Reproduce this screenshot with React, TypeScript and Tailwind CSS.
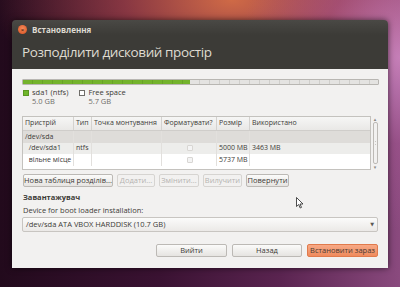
import React from 'react'

const font = { fontFamily: '"Open Sans", "DejaVu Sans", sans-serif' }

const Btn = ({ children, w, disabled, primary }: { children: React.ReactNode; w: string; disabled?: boolean; primary?: boolean }) => (
  <div
    className={`${w} h-[13px] flex items-center justify-center rounded-[2px] border text-[7.5px] leading-none whitespace-nowrap ${
      primary
        ? 'bg-gradient-to-b from-[#f7a986] to-[#ef8a5c] border-[#e07a4c] text-[#4a3a32]'
        : disabled
        ? 'bg-[#f2f1f0] border-[#d6d4d1] text-[#b5b3b0]'
        : 'bg-gradient-to-b from-[#fbfbfa] to-[#e6e4e1] border-[#bcb9b5] text-[#3c3b37]'
    }`}
  >
    {children}
  </div>
)

const Check = () => <div className="w-[6px] h-[6px] border border-[#d8d6d3] bg-[#f4f4f4] rounded-[1px]" />

export default function App() {
  const cols = ['w-[51px]', 'w-[18px]', 'w-[70px]', 'w-[55px]', 'w-[33px]', 'flex-1']
  const rows = [
    { bg: 'bg-[#dedcd9]', cells: ['/dev/sda', '', '', '', '', ''] },
    { bg: 'bg-[#ededeb]', cells: ['  /dev/sda1', 'ntfs', '', 'c', '5000 MB', '3463 MB'] },
    { bg: 'bg-white', cells: ['  вільне місце', '', '', 'c', '5737 MB', ''] },
  ]
  return (
    <div
      style={font}
      className="w-[400px] h-[287px] overflow-hidden relative bg-[linear-gradient(90deg,#220a1c_0%,#3a1232_40%,#5a2450_70%,#8a4a7e_100%)]"
    >
      <div className="absolute inset-0 bg-[radial-gradient(ellipse_60%_40%_at_58%_0%,rgba(214,110,70,0.95)_0%,rgba(190,80,80,0.6)_45%,rgba(120,40,80,0)_100%)]" />
      <div className="absolute inset-0 bg-[radial-gradient(ellipse_40%_60%_at_100%_20%,rgba(210,140,200,0.8)_0%,rgba(170,90,150,0.4)_50%,rgba(120,50,100,0)_100%)]" />
      <div className="relative ml-[12px] mt-[20px] w-[376px] h-[248px] flex flex-col rounded-t-[4px] overflow-hidden shadow-[0_0_6px_rgba(0,0,0,0.6)]">
        <div className="h-[49px] bg-gradient-to-b from-[#4a4945] to-[#3c3b37] to-[30%] flex flex-col px-[6px]">
          <div className="flex items-center h-[17px] mt-[1px]">
            <div className="w-[9px] h-[9px] rounded-full bg-[radial-gradient(circle_at_50%_40%,#f58a5a,#d9501f)] flex items-center justify-center">
              <span className="text-[6px] leading-none text-[#5a2a15] font-bold">×</span>
            </div>
            <span className="ml-[5px] text-[8px] font-bold text-[#dfdbd2]">Встановлення</span>
          </div>
          <div className="mt-[8px] ml-[4px] text-[13.5px] tracking-[-0.4px] leading-none text-[#dfdbd2] whitespace-nowrap">
            Розподілити дисковий простір
          </div>
        </div>
        <div className="flex-1 bg-[#f2f1f0] px-[10px] pt-[10px] flex flex-col">
          <div className="h-[6px] w-[357px] flex rounded-[1px] overflow-hidden border border-[#b8b6b2]">
            <div className="w-[167px] bg-[repeating-linear-gradient(90deg,#74b32c_0px,#74b32c_9px,#68a226_9px,#68a226_10px)]" />
            <div className="flex-1 bg-[repeating-linear-gradient(90deg,#e4e3e1_0px,#e4e3e1_9px,#cfcecb_9px,#cfcecb_10px)]" />
          </div>
          <div className="flex mt-[3px] ml-[1px] text-[7.5px] leading-[9px] text-[#3c3b37]">
            <div className="flex">
              <div className="w-[6px] h-[6px] bg-[#6fb62a] border border-[#5a9620] mt-[1.5px]" />
              <div className="ml-[3px]">
                <div>sda1 (ntfs)</div>
                <div className="text-[#6f6d69]">5.0 GB</div>
              </div>
            </div>
            <div className="flex ml-[11px]">
              <div className="w-[6px] h-[6px] bg-white border border-[#6f6d69] mt-[1.5px]" />
              <div className="ml-[3px]">
                <div>Free space</div>
                <div className="text-[#6f6d69]">5.7 GB</div>
              </div>
            </div>
          </div>
          <div className="flex mt-[10px]">
            <div className="w-[349px] h-[54px] border border-[#c4c2be] bg-white flex flex-col text-[7px] text-[#3c3b37]">
              <div className="flex h-[14px] bg-gradient-to-b from-[#f6f6f5] to-[#e9e8e6] border-b border-[#cfcdca]">
                {['Пристрій', 'Тип', 'Точка монтування', 'Форматувати?', 'Розмір', 'Використано'].map((h, i) => (
                  <div
                    key={i}
                    className={`${cols[i]} flex items-center pl-[2px] whitespace-nowrap overflow-hidden ${i < 5 ? 'border-r border-[#d4d2cf]' : ''}`}
                  >
                    {h}
                  </div>
                ))}
              </div>
              {rows.map((r, ri) => (
                <div key={ri} className={`flex h-[11.5px] ${r.bg}`}>
                  {r.cells.map((c, i) => (
                    <div
                      key={i}
                      className={`${cols[i]} flex items-center whitespace-pre overflow-hidden pl-[2px] ${i < 5 ? 'border-r border-[#e2e0dd]' : ''} ${
                        c === 'c' ? 'justify-center' : ''
                      }`}
                    >
                      {c === 'c' ? <Check /> : c}
                    </div>
                  ))}
                </div>
              ))}
            </div>
            <div className="ml-[1px] w-[6px] h-[54px] flex flex-col items-center">
              <div className="text-[5px] leading-[6px] text-[#8a8884]">▴</div>
              <div className="flex-1 w-[5px] border border-[#bdbab6] rounded-[2px] bg-[#f2f1f0] flex items-center justify-center">
                <div className="w-[1px] h-[4px] border-y border-[#c8c6c2]" />
              </div>
              <div className="text-[5px] leading-[6px] text-[#8a8884]">▾</div>
            </div>
          </div>
          <div className="flex gap-[4px] mt-[4px] ml-[1px]">
            <Btn w="w-[90px]">Нова таблиця розділів...</Btn>
            <Btn w="w-[38px]" disabled>Додати...</Btn>
            <Btn w="w-[40px]" disabled>Змінити...</Btn>
            <Btn w="w-[39px]" disabled>Вилучити</Btn>
            <Btn w="w-[43px]">Повернути</Btn>
          </div>
          <div className="mt-[5px] ml-[1px] text-[7.5px] font-bold text-[#3c3b37] leading-[10px]">Завантажувач</div>
          <div className="mt-[3px] ml-[1px] text-[7.5px] text-[#3c3b37] leading-[10px]">Device for boot loader installation:</div>
          <div className="mt-[2px] h-[15px] w-[356px] border border-[#c8c5c1] rounded-[2px] bg-gradient-to-b from-[#fbfbfa] to-[#ebe9e7] flex items-center px-[3px] text-[7.5px] text-[#3c3b37]">
            <span className="flex-1">/dev/sda ATA VBOX HARDDISK (10.7 GB)</span>
            <span className="text-[5px] text-[#5a5854]">▼</span>
          </div>
          <div className="flex justify-end gap-[5px] mt-[12px]">
            <Btn w="w-[71px]">Вийти</Btn>
            <Btn w="w-[70px]">Назад</Btn>
            <Btn w="w-[71px]" primary>Встановити зараз</Btn>
          </div>
        </div>
      </div>
      <svg className="absolute left-[296px] top-[197px]" width="8" height="12" viewBox="0 0 8 12">
        <path d="M0.5 0.5 L0.5 9.5 L2.7 7.5 L4.2 11 L5.5 10.4 L4 7 L7 7 Z" fill="#fff" stroke="#222" strokeWidth="0.8" />
      </svg>
    </div>
  )
}
